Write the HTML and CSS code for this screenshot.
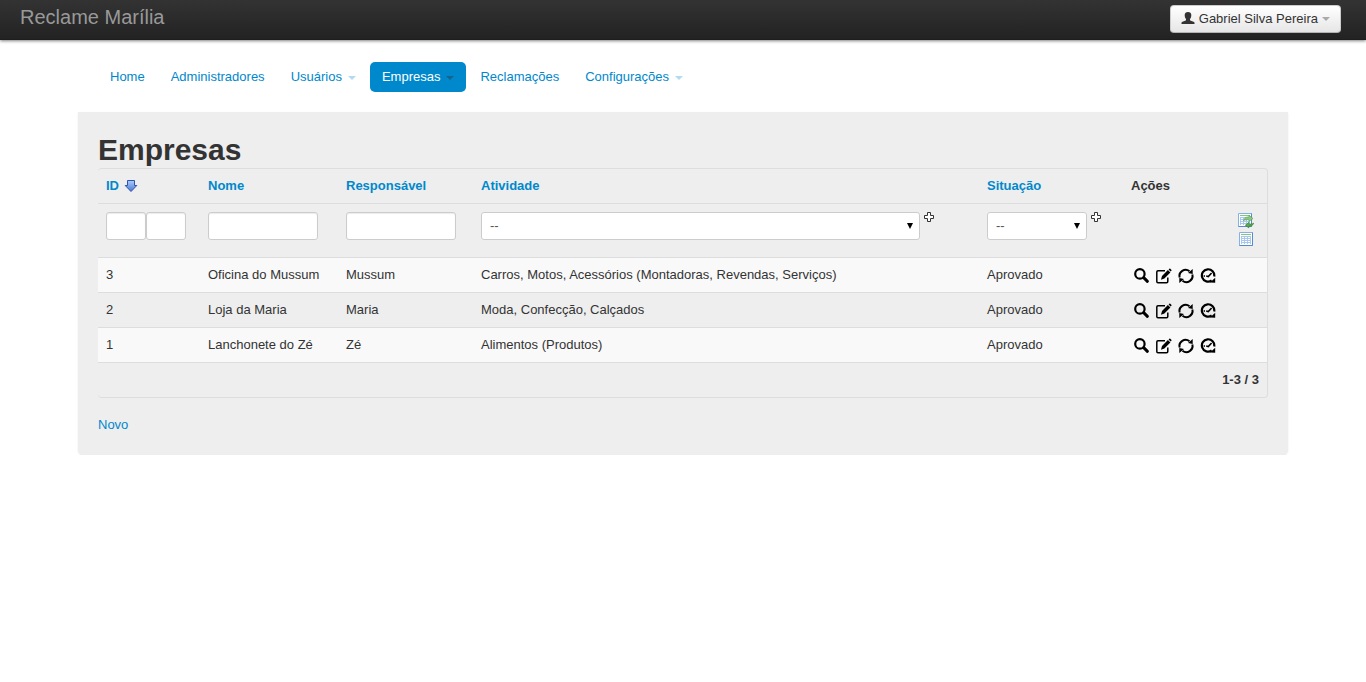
FILE: index.html
```html
<!DOCTYPE html>
<html lang="pt-BR">
<head>
<meta charset="utf-8">
<title>Reclame Marília</title>
<link rel="stylesheet" href="styles.css">
</head>
<body>
<svg class="sprite" aria-hidden="true">
  <symbol id="plus" viewBox="0 0 10 10"><path d="M3.5 .5h3v3h3v3h-3v3h-3v-3h-3v-3h3z" fill="#fff" stroke="#333"/></symbol>
  <symbol id="search" viewBox="0 0 16 16"><circle cx="5.900" cy="5.900" r="4.700" fill="none" stroke="#000" stroke-width="2.200"/><path d="M9.700 9.700l3.700 3.600" stroke="#000" stroke-width="3" stroke-linecap="round"/></symbol>
  <symbol id="edit" viewBox="0 0 16 16"><path d="M9 2.700H2c-.8 0-1.200.4-1.200 1.200v9.600c0 .8.4 1.200 1.200 1.200h8.600c.8 0 1.200-.4 1.200-1.200V9.500" fill="none" stroke="#000" stroke-width="1.500"/><path d="M5 11.700l1-3.600 5.900-6 2.500 2.400-6 6z"/><path d="M12.600 1.400l1-.9c.4-.4 2.400 1.600 2 2l-1 1z"/></symbol>
  <symbol id="sync" viewBox="0 0 16 16"><path d="M1.700 9.500A6.200 6 0 0 1 11.500 3.200M14.300 6.500A6.200 6 0 0 1 4.500 12.800" fill="none" stroke="#000" stroke-width="2"/><path d="M10 5L14.700 1v5zM6 11L1.300 15v-5z"/></symbol>
  <symbol id="history" viewBox="0 0 16 16"><path d="M11.700 12.500A6.200 6.200 0 1 1 14.200 8.500" fill="none" stroke="#000" stroke-width="2.200"/><path d="M10 14.500l5.200.2V9.700z"/><path d="M3.600 8H5M11.600 5L8.300 8.500 6.200 8" fill="none" stroke="#000" stroke-width="1.600"/></symbol>
  <symbol id="grid" viewBox="0 0 14 14"><path d="M.5 .5h13v13H.5z" fill="#fff" stroke="#86b2e3"/><path d="M.5 13.500h13V.5" fill="none" stroke="#568aca"/><path d="M2 2.500h10" stroke="#82c77d"/><path d="M2 4h10v8H2z" fill="#a9c8ee"/><path d="M3 5h2v1H3zM6 5h2v1H6zM9 5h2v1H9zM3 7h2v1H3zM6 7h2v1H6zM9 7h2v1H9zM3 9h2v1H3zM6 9h2v1H6zM9 9h2v1H9zM3 11h2v1H3zM6 11h2v1H6zM9 11h2v1H9z" fill="#fff"/></symbol>
</svg>

<header class="navbar">
  <a class="brand" href="#">Reclame Marília</a>
  <button class="user-button" type="button">
    <svg class="user-icon" viewBox="0 0 14 14" aria-hidden="true"><path d="M3.700 3C3.700 1 5 0 7 0s3.300 1 3.300 3c0 1.900-.5 3.200-1.300 4.100v1.200c.5.900 3.700 1.100 4.500 2.300V12H.5v-1.400C1.300 9.400 4.500 9.200 5 8.300V7.100C4.200 6.200 3.700 4.900 3.700 3z" fill="#333"/></svg>
    <span>Gabriel Silva Pereira</span>
    <span class="caret"></span>
  </button>
</header>

<div class="container">
  <nav class="pills">
    <a href="#">Home</a>
    <a href="#">Administradores</a>
    <a href="#">Usuários<span class="caret"></span></a>
    <a class="active" href="#">Empresas<span class="caret"></span></a>
    <a href="#">Reclamações</a>
    <a href="#">Configurações<span class="caret"></span></a>
  </nav>

  <main class="content">
    <h1>Empresas</h1>
    <div class="table-frame">
    <table class="grid">
      <colgroup><col class="c-id"><col class="c-name"><col class="c-owner"><col><col class="c-status"><col class="c-actions"></colgroup>
      <thead>
        <tr>
          <th><a class="sort" href="#">ID <svg class="arrow" viewBox="0 0 14 14" aria-label="decrescente"><defs><linearGradient id="blue" x2="0" y2="1"><stop stop-color="#aecbff"/><stop offset="1" stop-color="#4a78d0"/></linearGradient></defs><path d="M3.500 1.500h7v5h2.300L7 12.500 1.200 6.500h2.300z" fill="url(#blue)" stroke="#2c55ae"/></svg></a></th>
          <th><a href="#">Nome</a></th>
          <th><a href="#">Responsável</a></th>
          <th><a href="#">Atividade</a></th>
          <th><a href="#">Situação</a></th>
          <th>Ações</th>
        </tr>
        <tr class="filters">
          <td><div class="field"><input class="w-small" type="text" aria-label="ID de"><input class="w-small" type="text" aria-label="ID até"></div></td>
          <td><div class="field"><input class="w-text" type="text" aria-label="Nome"></div></td>
          <td><div class="field"><input class="w-text" type="text" aria-label="Responsável"></div></td>
          <td><div class="field"><span class="select w-wide"><select aria-label="Atividade"><option>--</option></select></span><button class="icon-button plus" type="button" aria-label="Mais atividades"><svg><use href="#plus"/></svg></button></div></td>
          <td><div class="field"><span class="select w-status"><select aria-label="Situação"><option>--</option></select></span><button class="icon-button plus" type="button" aria-label="Mais situações"><svg><use href="#plus"/></svg></button></div></td>
          <td><div class="tools">
            <button class="icon-button" type="button" aria-label="Filtrar"><svg class="filter-icon" viewBox="0 0 16 16"><use href="#grid" width="14" height="14"/><path d="M5.500 7.500C6.500 4.500 8.500 3.700 11 4V2.300l4 3.200-4 3V7C9 6.500 7.500 6.700 5.500 7.500z" fill="#8cc97f" stroke="#4f9f4b" stroke-width=".6"/><path d="M15.800 10.200c-1 2.300-2.800 3.300-5 3v1.700L7.300 12.200l3.500-2.900v1.500c2 .4 3.500.2 5-.6z" fill="#5aa954" stroke="#2f7a2f" stroke-width=".6"/></svg></button>
            <button class="icon-button" type="button" aria-label="Limpar filtro"><svg class="grid-icon"><use href="#grid"/></svg></button>
          </div></td>
        </tr>
      </thead>
      <tbody>
        <tr><td>3</td><td>Oficina do Mussum</td><td>Mussum</td><td>Carros, Motos, Acessórios (Montadoras, Revendas, Serviços)</td><td>Aprovado</td>
          <td><div class="actions"><a href="#" aria-label="Ver"><svg><use href="#search"/></svg></a><a href="#" aria-label="Editar"><svg><use href="#edit"/></svg></a><a href="#" aria-label="Atualizar"><svg><use href="#sync"/></svg></a><a href="#" aria-label="Histórico"><svg><use href="#history"/></svg></a></div></td></tr>
        <tr><td>2</td><td>Loja da Maria</td><td>Maria</td><td>Moda, Confecção, Calçados</td><td>Aprovado</td>
          <td><div class="actions"><a href="#" aria-label="Ver"><svg><use href="#search"/></svg></a><a href="#" aria-label="Editar"><svg><use href="#edit"/></svg></a><a href="#" aria-label="Atualizar"><svg><use href="#sync"/></svg></a><a href="#" aria-label="Histórico"><svg><use href="#history"/></svg></a></div></td></tr>
        <tr><td>1</td><td>Lanchonete do Zé</td><td>Zé</td><td>Alimentos (Produtos)</td><td>Aprovado</td>
          <td><div class="actions"><a href="#" aria-label="Ver"><svg><use href="#search"/></svg></a><a href="#" aria-label="Editar"><svg><use href="#edit"/></svg></a><a href="#" aria-label="Atualizar"><svg><use href="#sync"/></svg></a><a href="#" aria-label="Histórico"><svg><use href="#history"/></svg></a></div></td></tr>
      </tbody>
      <tfoot><tr><th class="pager" colspan="6">1-3 / 3</th></tr></tfoot>
    </table>
    </div>
    <a href="#">Novo</a>
  </main>
</div>
</body>
</html>
```

FILE: styles.css
```css
* { box-sizing: border-box; }

body {
  margin: 0;
  background: #fff;
  color: #333;
  font: 13px/18px "Liberation Sans", Arial, sans-serif;
}

a { color: #08c; text-decoration: none; }
button, input, select { font: inherit; color: inherit; }
svg { display: block; }
.sprite { position: absolute; width: 0; height: 0; }

.navbar {
  display: flex;
  align-items: flex-start;
  justify-content: space-between;
  height: 40px;
  padding: 5px 25px 0 20px;
  background: linear-gradient(#333, #222);
  box-shadow: 0 1px 3px rgba(0, 0, 0, .5), inset 0 -1px 0 rgba(0, 0, 0, .1);
}

.brand { color: #999; font-size: 20px; line-height: 24px; }

.user-button {
  display: flex;
  align-items: center;
  gap: 4px;
  height: 28px;
  padding: 0 10px;
  border: 1px solid #ccc;
  border-bottom-color: #b3b3b3;
  border-radius: 4px;
  background: linear-gradient(#fff, #e6e6e6);
}
.user-icon { width: 14px; height: 14px; }

.caret {
  display: inline-block;
  border: 4px solid transparent;
  border-top-color: #000;
  border-bottom: 0;
  opacity: .3;
}

.container { max-width: 1170px; margin: 22px auto 0; }

.pills { display: flex; gap: 2px; margin-bottom: 20px; }
.pills a {
  display: flex;
  align-items: center;
  padding: 8px 12px;
  border-radius: 5px;
  line-height: 14px;
}
.pills .caret { margin: 2px 0 0 6px; border-top-color: #08c; }
.pills .active { background: #08c; color: #fff; }
.pills .active .caret { border-top-color: #333; opacity: .4; }

.content {
  margin: 0 -20px;
  padding: 20px 20px 21px;
  border-radius: 0 0 6px 6px;
  background: #eee;
  box-shadow: 0 1px 2px rgba(0, 0, 0, .1);
}
h1 { margin: 0; font-size: 30px; line-height: 36px; }

.table-frame {
  margin-bottom: 18px;
  border: 1px solid #ddd;
  border-left: 0;
  border-radius: 4px;
  overflow: hidden;
}
.grid {
  width: 100%;
  table-layout: fixed;
  border-spacing: 0;
}
.c-id { width: 102px; }
.c-name { width: 138px; }
.c-owner { width: 135px; }
.c-status, .c-actions { width: 144px; }

.grid th, .grid td {
  padding: 8px;
  border-bottom: 1px solid #ddd;
  text-align: left;
  vertical-align: top;
}
.grid tbody tr:nth-child(odd) { background: #f9f9f9; }
.grid tfoot .pager { border-bottom: 0; text-align: right; }

.sort { display: flex; align-items: center; gap: 5px; }
.arrow { width: 14px; height: 14px; }

.filters .field { display: flex; align-items: flex-start; padding-bottom: 9px; }
.filters input, .filters select {
  height: 28px;
  padding: 4px 8px;
  border: 1px solid #ccc;
  border-radius: 3px;
  background: #fff;
}
.filters input { box-shadow: inset 0 1px 1px rgba(0, 0, 0, .08); }
.filters select { width: 100%; appearance: none; color: #555; }
.w-small { width: 40px; }
.w-text { width: 110px; }
.w-wide { flex: 0 1 439px; }
.w-status { width: 100px; }

.select { position: relative; }
.select::after {
  content: "";
  position: absolute;
  top: 11px;
  right: 7px;
  border: 3px solid transparent;
  border-top: 6px solid #000;
  border-bottom: 0;
  pointer-events: none;
}

.icon-button { padding: 0; border: 0; background: none; }
.plus { margin-left: 4px; }
.plus svg { width: 10px; height: 10px; }

.tools {
  display: flex;
  flex-direction: column;
  align-items: flex-end;
  gap: 3px;
  padding: 1px 5px 0 0;
}
.filter-icon { width: 16px; height: 16px; }
.grid-icon { width: 14px; height: 14px; margin-right: 1px; }

.actions { display: flex; gap: 6px; padding: 2px 0 0 3px; }
.actions svg { width: 16px; height: 16px; }
```
